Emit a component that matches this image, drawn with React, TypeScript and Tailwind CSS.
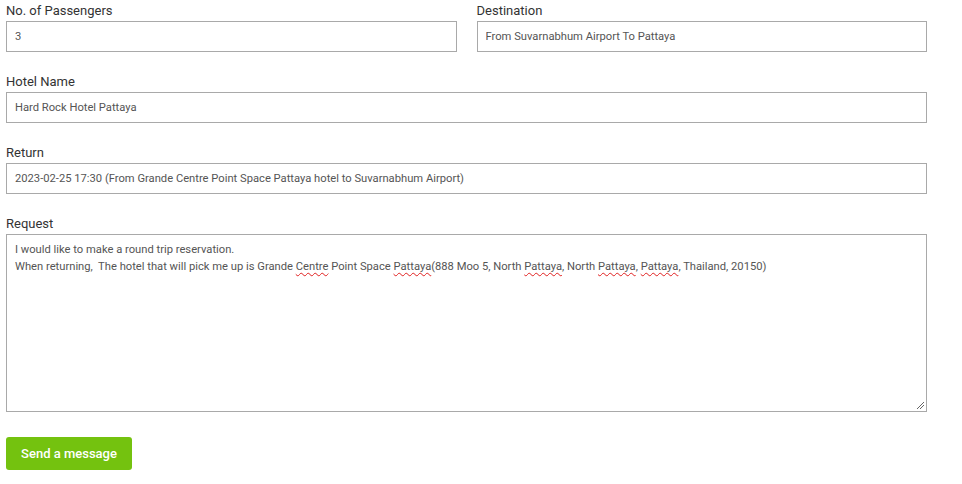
const FIELD_INPUT =
  'block w-full h-[31px] border border-[#a9a9a9] bg-white px-[8px] text-[11.2px] text-[#555] outline-none';

function Label({ children }: { children: React.ReactNode }) {
  return <div className="pt-[1px] text-[13px] leading-[20px] text-[#333]">{children}</div>;
}

function Squiggle({ children }: { children: React.ReactNode }) {
  return (
    <span className="underline decoration-wavy decoration-[#e02020] decoration-1 underline-offset-2">
      {children}
    </span>
  );
}

export default function App() {
  return (
    <div
      className="w-[962px] h-[484px] bg-white px-[6px]"
      style={{ fontFamily: 'Roboto, "Liberation Sans", sans-serif' }}
    >
      <div className="w-[921px] flex flex-col gap-[19px]">
        <div className="grid grid-cols-2 gap-[20px]">
          <div>
            <Label>No. of Passengers</Label>
            <input className={FIELD_INPUT} defaultValue="3" readOnly />
          </div>
          <div>
            <Label>Destination</Label>
            <input className={FIELD_INPUT} defaultValue="From Suvarnabhum Airport To Pattaya" readOnly />
          </div>
        </div>

        <div>
          <Label>Hotel Name</Label>
          <input className={FIELD_INPUT} defaultValue="Hard Rock Hotel Pattaya" readOnly />
        </div>

        <div>
          <Label>Return</Label>
          <input
            className={FIELD_INPUT}
            defaultValue="2023-02-25 17:30 (From Grande Centre Point Space Pattaya hotel to Suvarnabhum Airport)"
            readOnly
          />
        </div>

        <div>
          <Label>Request</Label>
          <div className="relative h-[178px] border border-[#a9a9a9] bg-white px-[8px] pt-[6px] text-[11.2px] leading-[17px] text-[#555]">
            <div>I would like to make a round trip reservation.</div>
            <div className="whitespace-pre">
              When returning,  The hotel that will pick me up is Grande <Squiggle>Centre</Squiggle> Point Space{' '}
              <Squiggle>Pattaya</Squiggle>(888 Moo 5, North <Squiggle>Pattaya</Squiggle>, North{' '}
              <Squiggle>Pattaya</Squiggle>, <Squiggle>Pattaya</Squiggle>, Thailand, 20150)
            </div>
            <svg className="absolute right-[1px] bottom-[1px]" width="9" height="9" viewBox="0 0 9 9">
              <path d="M8 1 L1 8 M8 4 L4 8" stroke="#666" strokeWidth="1" />
            </svg>
          </div>
        </div>
      </div>

      <button className="mt-[25px] h-[33px] w-[126px] rounded-[3px] bg-[#74c20f] text-[13px] font-medium text-white">
        Send a message
      </button>
    </div>
  );
}
